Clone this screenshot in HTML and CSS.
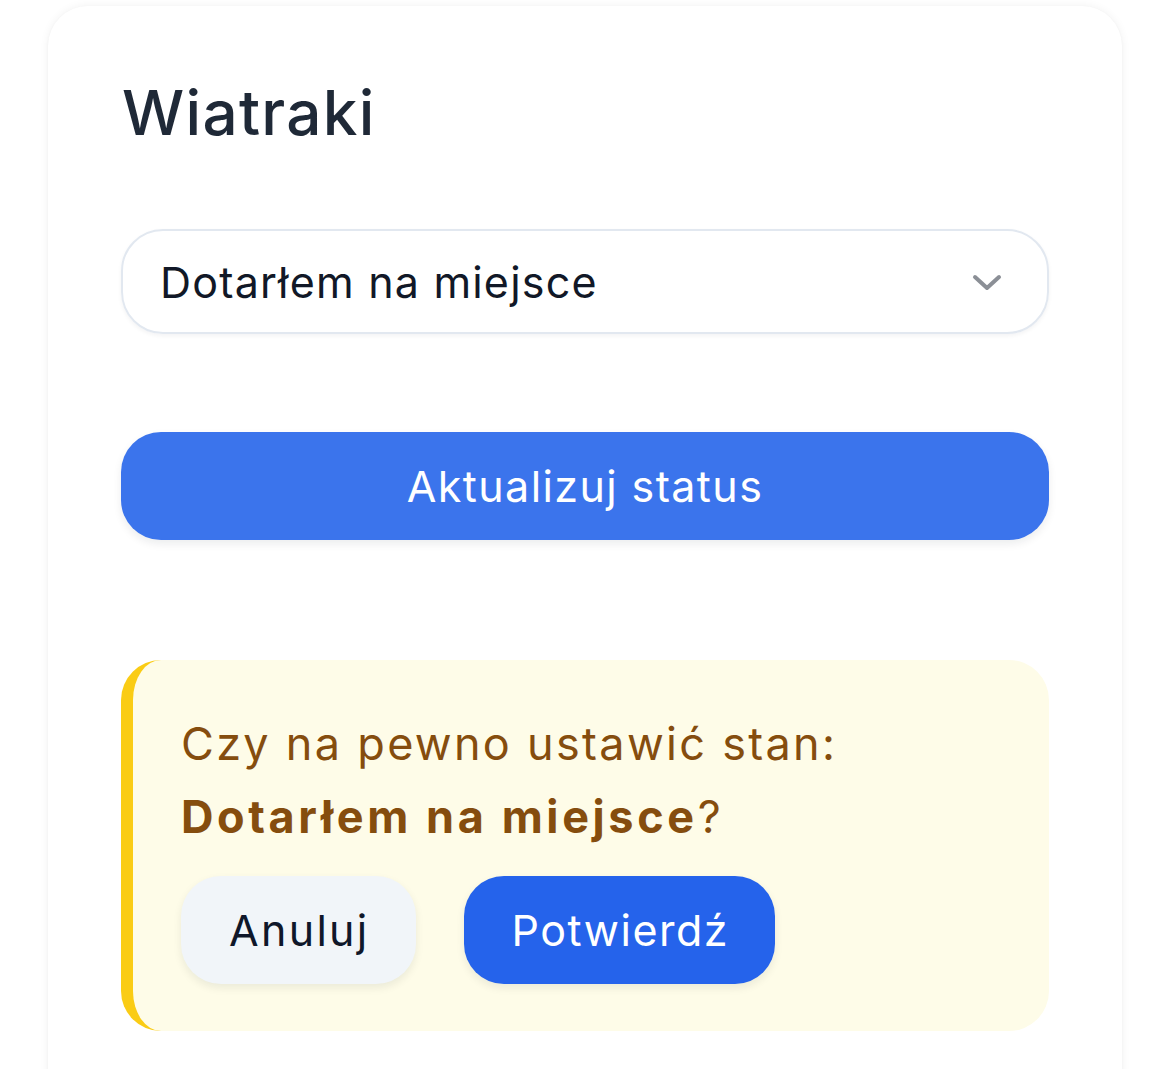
FILE: index.html
```html
<!DOCTYPE html>
<html lang="pl">
<head>
<meta charset="utf-8">
<title>Wiatraki</title>
<link rel="stylesheet" href="styles.css">
</head>
<body>
<main class="card">
  <h1 class="title">Wiatraki</h1>
  <div class="select">
    <span class="select-value">Dotarłem na miejsce</span>
    <svg class="chevron" width="30" height="17" viewBox="0 0 30 17" aria-hidden="true">
      <polyline points="3,3 15,14 27,3" fill="none" stroke="#8b8f96" stroke-width="4" stroke-linecap="round" stroke-linejoin="round"/>
    </svg>
  </div>
  <button class="btn-primary">Aktualizuj status</button>
  <section class="confirm">
    <p class="confirm-text">Czy na pewno ustawić stan:<br><strong>Dotarłem na miejsce</strong>?</p>
    <div class="confirm-actions">
      <button class="btn-cancel">Anuluj</button>
      <button class="btn-confirm">Potwierdź</button>
    </div>
  </section>
</main>
</body>
</html>
```

FILE: styles.css
```css
* { box-sizing: border-box; }

html, body {
  margin: 0;
  padding: 0;
  background: #ffffff;
  overflow: hidden;
}

body {
  font-family: "Inter", "Noto Sans", sans-serif;
  height: 1069px;
}

.card {
  margin: 6px 40px 0 48px;
  padding: 71px 73px 80px 73px;
  background: #ffffff;
  border-radius: 40px;
  box-shadow: 0 0 10px rgba(15, 23, 42, 0.06), 0 1px 3px rgba(15, 23, 42, 0.04);
  display: flex;
  flex-direction: column;
}

.title {
  margin: 0 0 80px 1px;
  font-size: 62px;
  line-height: 72px;
  font-weight: 500;
  color: #1f2937;
  letter-spacing: 1.3px;
}

.select {
  height: 105px;
  border: 2px solid #e2e8f0;
  border-radius: 42px;
  display: flex;
  align-items: center;
  justify-content: space-between;
  padding: 0 45px 0 37px;
  box-shadow: 0 2px 4px rgba(15, 23, 42, 0.05);
}

.select-value {
  font-size: 43px;
  color: #111827;
  letter-spacing: 1.2px;
}

.chevron { display: block; margin-top: 2px; }

.btn-primary {
  margin-top: 98px;
  height: 108px;
  border: none;
  border-radius: 40px;
  background: #3b74ec;
  color: #ffffff;
  font-family: inherit;
  font-size: 43px;
  letter-spacing: 1.4px;
  box-shadow: 0 4px 8px rgba(15, 23, 42, 0.08);
  padding: 0;
}

.confirm {
  margin-top: 120px;
  background: #fefce8;
  border-left: 12px solid #facc15;
  border-radius: 40px;
  padding: 47px 48px 47px 48px;
}

.confirm-text {
  margin: 0;
  font-size: 45px;
  line-height: 73px;
  color: #854d0e;
  font-weight: 400;
  letter-spacing: 2.3px;
}

.confirm-text strong {
  font-weight: 700;
  letter-spacing: 3.6px;
}

.confirm-actions {
  display: flex;
  gap: 48px;
  margin-top: 23px;
}

.btn-cancel,
.btn-confirm {
  height: 108px;
  border: none;
  border-radius: 40px;
  font-family: inherit;
  font-size: 43px;
  padding: 0 46px 0 48px;
  box-shadow: 0 4px 8px rgba(15, 23, 42, 0.08);
}

.btn-cancel {
  background: #f1f5f9;
  color: #0f172a;
  letter-spacing: 2.3px;
}

.btn-confirm {
  background: #2563eb;
  color: #ffffff;
  letter-spacing: 1.5px;
}
```
